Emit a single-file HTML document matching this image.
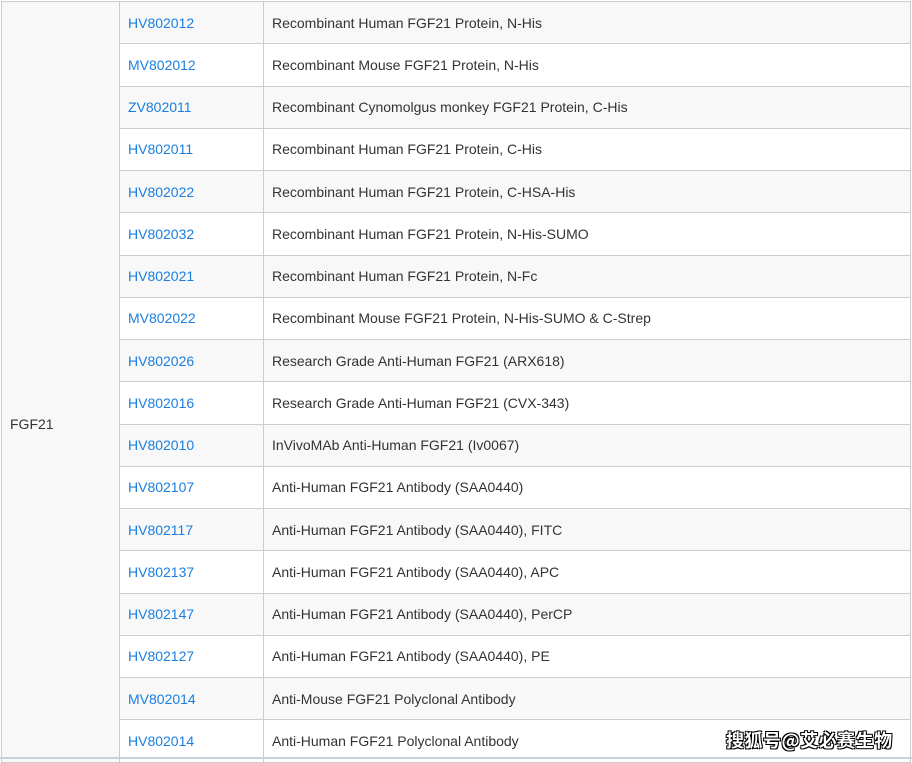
<!DOCTYPE html>
<html><head><meta charset="utf-8"><style>
html,body{margin:0;padding:0;background:#fff;width:912px;height:759px;overflow:hidden;}
table{position:absolute;left:1px;top:1px;border-collapse:collapse;width:910px;font-family:"Liberation Sans",sans-serif;font-size:14px;color:#333;}
td{border:1px solid #ccc;height:42.25px;padding:0 0 0 8px;box-sizing:border-box;}
tr:nth-child(odd) td{background:#f8f8f8;}
td.g{background:#f8f8f8!important;width:118px;vertical-align:top;padding-top:414px;}
td.c{width:144px;}
a{color:#1a7fe0;text-decoration:none;}
.wm{position:absolute;left:726px;top:727px;font-family:"Noto Sans CJK SC",sans-serif;font-weight:bold;font-size:18px;color:#fff;text-shadow:1px 1px 0 #000,-1px -1px 0 #000,1px -1px 0 #000,-1px 1px 0 #000;letter-spacing:0.5px;}
.bl{position:absolute;left:0;top:757px;width:912px;height:2px;background:#c8d0dc;}
</style></head><body>
<table>
<tr><td class="g" rowspan="18">FGF21</td><td class="c"><a>HV802012</a></td><td>Recombinant Human FGF21 Protein, N-His</td></tr>
<tr><td class="c"><a>MV802012</a></td><td>Recombinant Mouse FGF21 Protein, N-His</td></tr>
<tr><td class="c"><a>ZV802011</a></td><td>Recombinant Cynomolgus monkey FGF21 Protein, C-His</td></tr>
<tr><td class="c"><a>HV802011</a></td><td>Recombinant Human FGF21 Protein, C-His</td></tr>
<tr><td class="c"><a>HV802022</a></td><td>Recombinant Human FGF21 Protein, C-HSA-His</td></tr>
<tr><td class="c"><a>HV802032</a></td><td>Recombinant Human FGF21 Protein, N-His-SUMO</td></tr>
<tr><td class="c"><a>HV802021</a></td><td>Recombinant Human FGF21 Protein, N-Fc</td></tr>
<tr><td class="c"><a>MV802022</a></td><td>Recombinant Mouse FGF21 Protein, N-His-SUMO &amp; C-Strep</td></tr>
<tr><td class="c"><a>HV802026</a></td><td>Research Grade Anti-Human FGF21 (ARX618)</td></tr>
<tr><td class="c"><a>HV802016</a></td><td>Research Grade Anti-Human FGF21 (CVX-343)</td></tr>
<tr><td class="c"><a>HV802010</a></td><td>InVivoMAb Anti-Human FGF21 (Iv0067)</td></tr>
<tr><td class="c"><a>HV802107</a></td><td>Anti-Human FGF21 Antibody (SAA0440)</td></tr>
<tr><td class="c"><a>HV802117</a></td><td>Anti-Human FGF21 Antibody (SAA0440), FITC</td></tr>
<tr><td class="c"><a>HV802137</a></td><td>Anti-Human FGF21 Antibody (SAA0440), APC</td></tr>
<tr><td class="c"><a>HV802147</a></td><td>Anti-Human FGF21 Antibody (SAA0440), PerCP</td></tr>
<tr><td class="c"><a>HV802127</a></td><td>Anti-Human FGF21 Antibody (SAA0440), PE</td></tr>
<tr><td class="c"><a>MV802014</a></td><td>Anti-Mouse FGF21 Polyclonal Antibody</td></tr>
<tr><td class="c"><a>HV802014</a></td><td>Anti-Human FGF21 Polyclonal Antibody</td></tr>
</table>
<div class="bl"></div>
<div class="wm">搜狐号@艾必赛生物</div>
</body></html>
